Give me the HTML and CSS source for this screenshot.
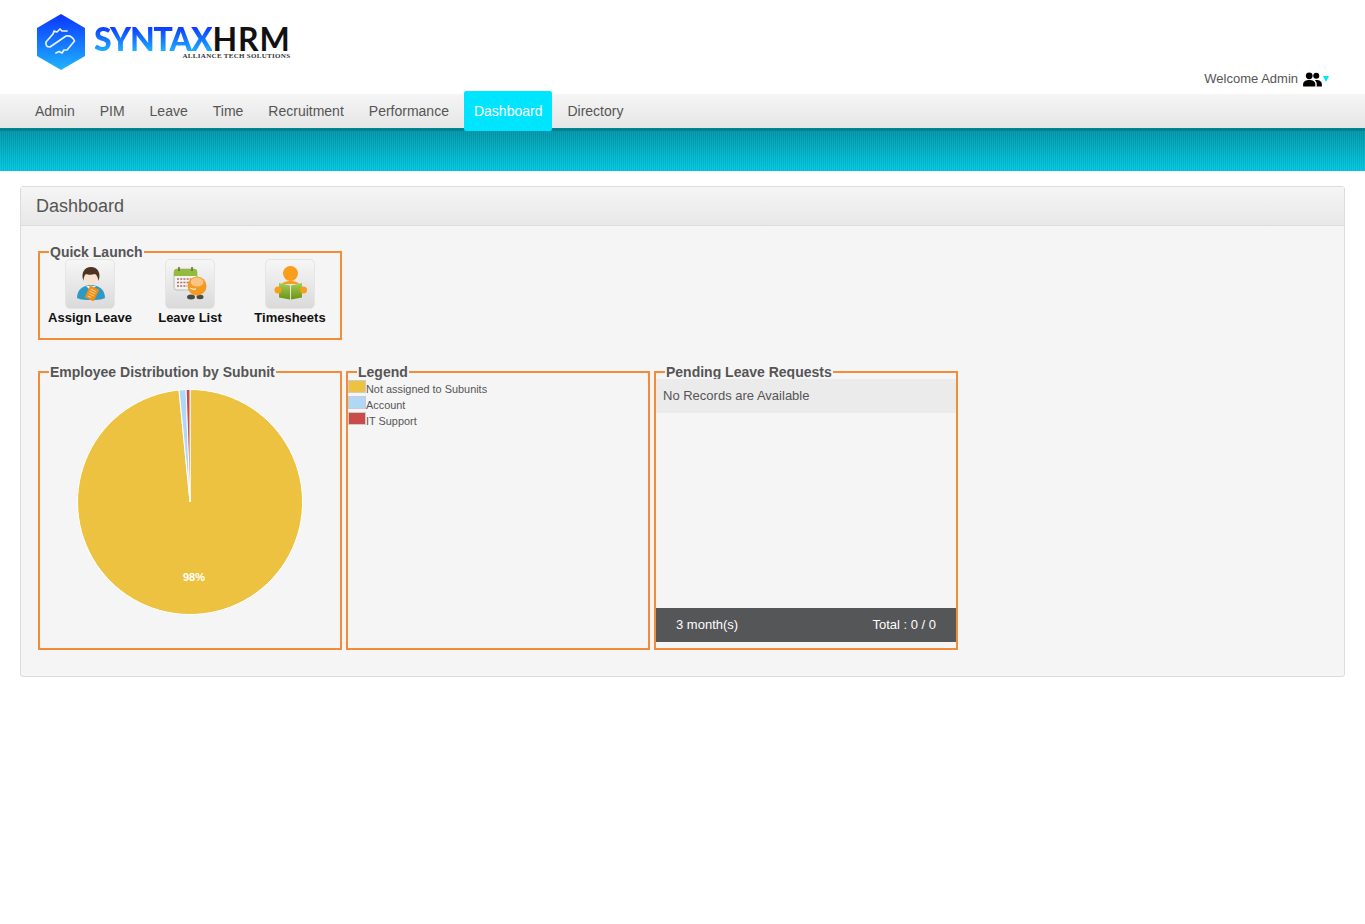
FILE: index.html
```html
<!DOCTYPE html>
<html lang="en">
<head>
    <meta charset="UTF-8">
    <title>SyntaxHRM Dashboard</title>
    <link rel="stylesheet" href="styles.css">
</head>
<body>
    <header class="top-bar">
        <div class="logo">
            <svg class="logo-mark" width="50" height="58" viewBox="0 0 50 58">
                <defs>
                    <linearGradient id="hexFill" x1="0" y1="0" x2="0" y2="1">
                        <stop offset="0" stop-color="#0b35ff"/>
                        <stop offset="1" stop-color="#1fb4ff"/>
                    </linearGradient>
                </defs>
                <polygon points="25,1 49,15 49,43 25,57 1,43 1,15" fill="url(#hexFill)"/>
                <path d="M31 18 L26 18 L24 16 L21 19 L18 18 L17 21 L10 29 Q9 34 14 34 L30 23 Q36 22 38.500 28 L31 37 L28 37 L26 40 L23 38.500 L20 40"
                    fill="none" stroke="#e6f5ff" stroke-width="1.700" stroke-linejoin="round" stroke-linecap="round"/>
            </svg>
            <div class="logo-text">
                <div class="logo-name"><span class="logo-syntax">SYNTAX</span><span class="logo-hrm">HRM</span></div>
                <div class="logo-tag">ALLIANCE TECH SOLUTIONS</div>
            </div>
        </div>
        <div class="welcome">
            <span>Welcome Admin</span>
            <svg class="welcome-icon" width="19" height="15" viewBox="0 0 20 16">
                <circle cx="6.500" cy="4" r="3.600" fill="#000"/>
                <circle cx="14" cy="4" r="3.200" fill="#000"/>
                <path d="M0 15.500 v-2.500 c0 -3 3 -4.500 6.500 -4.500 s6.500 1.500 6.500 4.500 v2.500 z" fill="#000"/>
                <path d="M14.500 15.500 v-2.500 c0 -1.800 -0.800 -3.200 -2 -4.200 c0.500 -0.200 1 -0.300 1.700 -0.300 c3 0 5.800 1.500 5.800 4.500 v2.500 z" fill="#000"/>
            </svg>
            <span class="welcome-caret"></span>
        </div>
    </header>

    <nav class="main-nav">
        <a href="#">Admin</a>
        <a href="#">PIM</a>
        <a href="#">Leave</a>
        <a href="#">Time</a>
        <a href="#">Recruitment</a>
        <a href="#">Performance</a>
        <a href="#" class="active">Dashboard</a>
        <a href="#">Directory</a>
    </nav>
    <div class="sub-band"></div>

    <section class="panel">
        <h1 class="panel-head">Dashboard</h1>
        <div class="panel-body">
            <fieldset class="box quick-box">
                <legend>Quick Launch</legend>
                <div class="quick-list">
                    <a href="#" class="quick-item">
                        <span class="quick-tile">
                            <svg width="36" height="40" viewBox="0 0 36 40">
                                <path d="M5 34 c0 -8 6 -13 14 -13 s14 5 14 13 c-4 2 -9 2 -14 2 s-10 0 -14 -2 z" fill="#2c9ac4"/>
                                <path d="M14 22 l5 5 l5 -5 z" fill="#e9f4f8"/>
                                <ellipse cx="19" cy="13" rx="6.500" ry="8.500" fill="#f8e2cf"/>
                                <path d="M11.500 17 c-3 -8 1 -14 7.500 -14 s10.500 6 7.500 14 c-0.500 -3 -1.500 -6 -3.500 -7 c-3 1 -7 1 -9 0 c-1.500 1 -2.500 4 -2.500 7 z" fill="#4f3322"/>
                                <g transform="rotate(25 20 29.500)">
                                    <rect x="15" y="23" width="10" height="13" rx="1" fill="#ef8c1c"/>
                                    <path d="M17 26 h6 M17 28.500 h6 M17 31 h6 M17 33.500 h4" stroke="#ffd270" stroke-width="1"/>
                                </g>
                            </svg>
                        </span>
                        <span class="quick-label">Assign Leave</span>
                    </a>
                    <a href="#" class="quick-item">
                        <span class="quick-tile">
                            <svg width="36" height="40" viewBox="0 0 36 40">
                                <rect x="2" y="5" width="23" height="21" rx="3" fill="#f3f3f0" stroke="#bdbdb4"/>
                                <path d="M2 12 v-4 a3 3 0 0 1 3 -3 h17 a3 3 0 0 1 3 3 v4 z" fill="#93bb3e"/>
                                <path d="M7 3 v4 M20 3 v4" stroke="#5d6b3a" stroke-width="1.500"/>
                                <path d="M5 15 h14 M5 18.500 h12 M5 22 h10" stroke="#b8696a" stroke-width="1.500" stroke-dasharray="2 1.200"/>
                                <ellipse cx="19" cy="33" rx="4" ry="2.500" fill="#4a4a46"/>
                                <ellipse cx="28" cy="33" rx="3.500" ry="2.200" fill="#4a4a46"/>
                                <circle cx="25" cy="22" r="9.500" fill="#f39a22"/>
                                <ellipse cx="25" cy="18" rx="6.500" ry="4.500" fill="#fac580"/>
                                <path d="M18 24 q3 2 6 1" fill="none" stroke="#fff" stroke-width="1"/>
                            </svg>
                        </span>
                        <span class="quick-label">Leave List</span>
                    </a>
                    <a href="#" class="quick-item">
                        <span class="quick-tile">
                            <svg width="36" height="40" viewBox="0 0 36 40">
                                <defs>
                                    <linearGradient id="bookFill" x1="0" y1="0" x2="0" y2="1">
                                        <stop offset="0" stop-color="#a6cc55"/>
                                        <stop offset="1" stop-color="#6a9414"/>
                                    </linearGradient>
                                </defs>
                                <circle cx="18.500" cy="9.500" r="7.500" fill="#f99d1c"/>
                                <path d="M10 20 c2 -4 15 -4 17 0 z" fill="#f99d1c"/>
                                <path d="M7 19 l11 2.500 v14 l-11 -2 z" fill="url(#bookFill)"/>
                                <path d="M30 19 l-11 2.500 v14 l11 -2 z" fill="url(#bookFill)"/>
                                <circle cx="6" cy="26" r="3.500" fill="#f99d1c"/>
                                <circle cx="31.500" cy="26" r="3.500" fill="#f99d1c"/>
                            </svg>
                        </span>
                        <span class="quick-label">Timesheets</span>
                    </a>
                </div>
            </fieldset>

            <div class="box-row">
                <fieldset class="box">
                    <legend>Employee Distribution by Subunit</legend>
                    <div class="pie-wrap">
                        <svg width="228" height="228" viewBox="-114 -114 228 228">
                            <path d="M0 0 L0 -112.500 A112.500 112.500 0 1 1 -10.980 -111.960 Z" fill="#edc240" stroke="#fff"/>
                            <path d="M0 0 L-10.980 -111.960 A112.500 112.500 0 0 1 -3.920 -112.430 Z" fill="#afd8f8" stroke="#fff"/>
                            <path d="M0 0 L-3.920 -112.430 A112.500 112.500 0 0 1 0 -112.500 Z" fill="#cb4b4b" stroke="#fff"/>
                        </svg>
                        <span class="pie-label">98%</span>
                    </div>
                </fieldset>

                <fieldset class="box">
                    <legend>Legend</legend>
                    <ul class="legend-list">
                        <li><span class="swatch swatch-gold"></span>Not assigned to Subunits</li>
                        <li><span class="swatch swatch-blue"></span>Account</li>
                        <li><span class="swatch swatch-red"></span>IT Support</li>
                    </ul>
                </fieldset>

                <fieldset class="box">
                    <legend>Pending Leave Requests</legend>
                    <div class="pending">
                        <div class="pending-empty">No Records are Available</div>
                        <div class="pending-foot">
                            <span>3 month(s)</span>
                            <span>Total : 0 / 0</span>
                        </div>
                    </div>
                </fieldset>
            </div>
        </div>
    </section>
</body>
</html>
```

FILE: styles.css
```css
body {
    margin: 0;
    background-color: #fff;
    font-family: "Liberation Sans", Arial, sans-serif;
    font-size: 14px;
    color: #555;
}
a {
    text-decoration: none;
    color: inherit;
}

.top-bar {
    height: 94px;
    display: flex;
    justify-content: space-between;
    align-items: flex-start;
    box-sizing: border-box;
    padding: 13px 36px 0 36px;
}
.logo {
    display: flex;
    align-items: flex-start;
}
.logo-text {
    margin: 13px 0 0 8px;
    display: flex;
    flex-direction: column;
}
.logo-name {
    font-family: Lato, sans-serif;
    font-size: 32px;
    line-height: 26px;
    display: flex;
}
.logo-syntax {
    font-weight: 900;
    letter-spacing: -1.100px;
    background: linear-gradient(#0b35ff, #1fb4ff);
    -webkit-background-clip: text;
    background-clip: text;
    color: transparent;
}
.logo-hrm {
    font-weight: 700;
    letter-spacing: 0.8px;
    color: #111;
    margin-left: 1px;
}
.logo-tag {
    align-self: flex-end;
    margin-top: 1px;
    font-family: "Liberation Serif", serif;
    font-weight: bold;
    font-size: 7px;
    line-height: 7px;
    letter-spacing: 0.3px;
    color: #333;
}
.welcome {
    margin-top: 57px;
    display: flex;
    align-items: center;
    font-size: 13px;
    line-height: 18px;
}
.welcome-icon {
    margin-left: 5px;
}
.welcome-caret {
    width: 0;
    height: 0;
    margin: 0 0 0 1px;
    border-left: 3px solid transparent;
    border-right: 3px solid transparent;
    border-top: 6px solid #00e5ff;
}

.main-nav {
    height: 34px;
    display: flex;
    gap: 5px;
    padding-left: 25px;
    background: linear-gradient(#f5f5f5, #e6e6e6);
}
.main-nav a {
    height: 40px;
    margin-top: -3px;
    padding: 0 10px;
    line-height: 40px;
    border-radius: 2px;
    position: relative;
}
.main-nav a.active {
    background-color: #00e5ff;
    color: #fff;
}
.sub-band {
    height: 40px;
    border-top: 3px solid #008290;
    background:
        repeating-linear-gradient(90deg, rgba(255,255,255,0.05) 0 1px, rgba(0,0,0,0.03) 1px 2px),
        linear-gradient(#0096a8, #00c6e0);
}

.panel {
    margin: 15px 20px 0 20px;
    background-color: #f5f5f5;
    border: 1px solid #ddd;
    border-radius: 3px;
}
.panel-head {
    margin: 0;
    height: 38px;
    padding-left: 15px;
    line-height: 38px;
    font-size: 18px;
    font-weight: normal;
    color: #555;
    background: linear-gradient(#f5f5f5, #e8e8e8);
    border-bottom: 1px solid #ddd;
}
.panel-body {
    padding: 19px 17px 26px 17px;
}

.box {
    width: 304px;
    box-sizing: border-box;
    margin: 0;
    padding: 0;
    min-width: 0;
    border: 2px solid #f28c38;
}
.box legend {
    margin-left: 9px;
    padding: 0 1px;
    font-size: 14px;
    font-weight: bold;
    line-height: 14px;
    color: #555;
}

.quick-box {
    height: 95px;
}
.quick-list {
    display: flex;
}
.quick-item {
    width: 100px;
    display: flex;
    flex-direction: column;
    align-items: center;
}
.quick-tile {
    width: 50px;
    height: 50px;
    box-sizing: border-box;
    display: flex;
    align-items: center;
    justify-content: center;
    border: 1px solid #e6e6e0;
    border-radius: 5px;
    background: linear-gradient(#f6f6f6, #dadada);
}
.quick-label {
    margin-top: 1px;
    font-size: 13px;
    font-weight: bold;
    line-height: 16px;
    color: #111;
}

.box-row {
    display: flex;
    gap: 4px;
    margin-top: 25px;
}
.box-row .box {
    height: 285px;
}
.pie-wrap {
    position: relative;
    display: flex;
    justify-content: center;
    padding-top: 8.500px;
}
.pie-label {
    position: absolute;
    left: 143px;
    top: 192px;
    font-size: 11px;
    font-weight: bold;
    color: #fff;
}

.legend-list {
    list-style: none;
    margin: 0;
    padding: 1px 0 0 0;
    font-size: 10.900px;
}
.legend-list li {
    height: 16px;
    display: flex;
    line-height: 18px;
}
.swatch {
    width: 16px;
    height: 11px;
    border: 1px solid #ccc;
}
.swatch-gold {
    background-color: #edc240;
}
.swatch-blue {
    background-color: #afd8f8;
}
.swatch-red {
    background-color: #cb4b4b;
}

.pending {
    height: 263px;
    display: flex;
    flex-direction: column;
    justify-content: space-between;
    font-size: 13px;
}
.pending-empty {
    height: 34px;
    line-height: 33px;
    padding-left: 7px;
    background-color: #ebebeb;
}
.pending-foot {
    height: 34px;
    display: flex;
    justify-content: space-between;
    padding: 0 20px;
    line-height: 33px;
    color: #fff;
    background-color: #555658;
}
```
